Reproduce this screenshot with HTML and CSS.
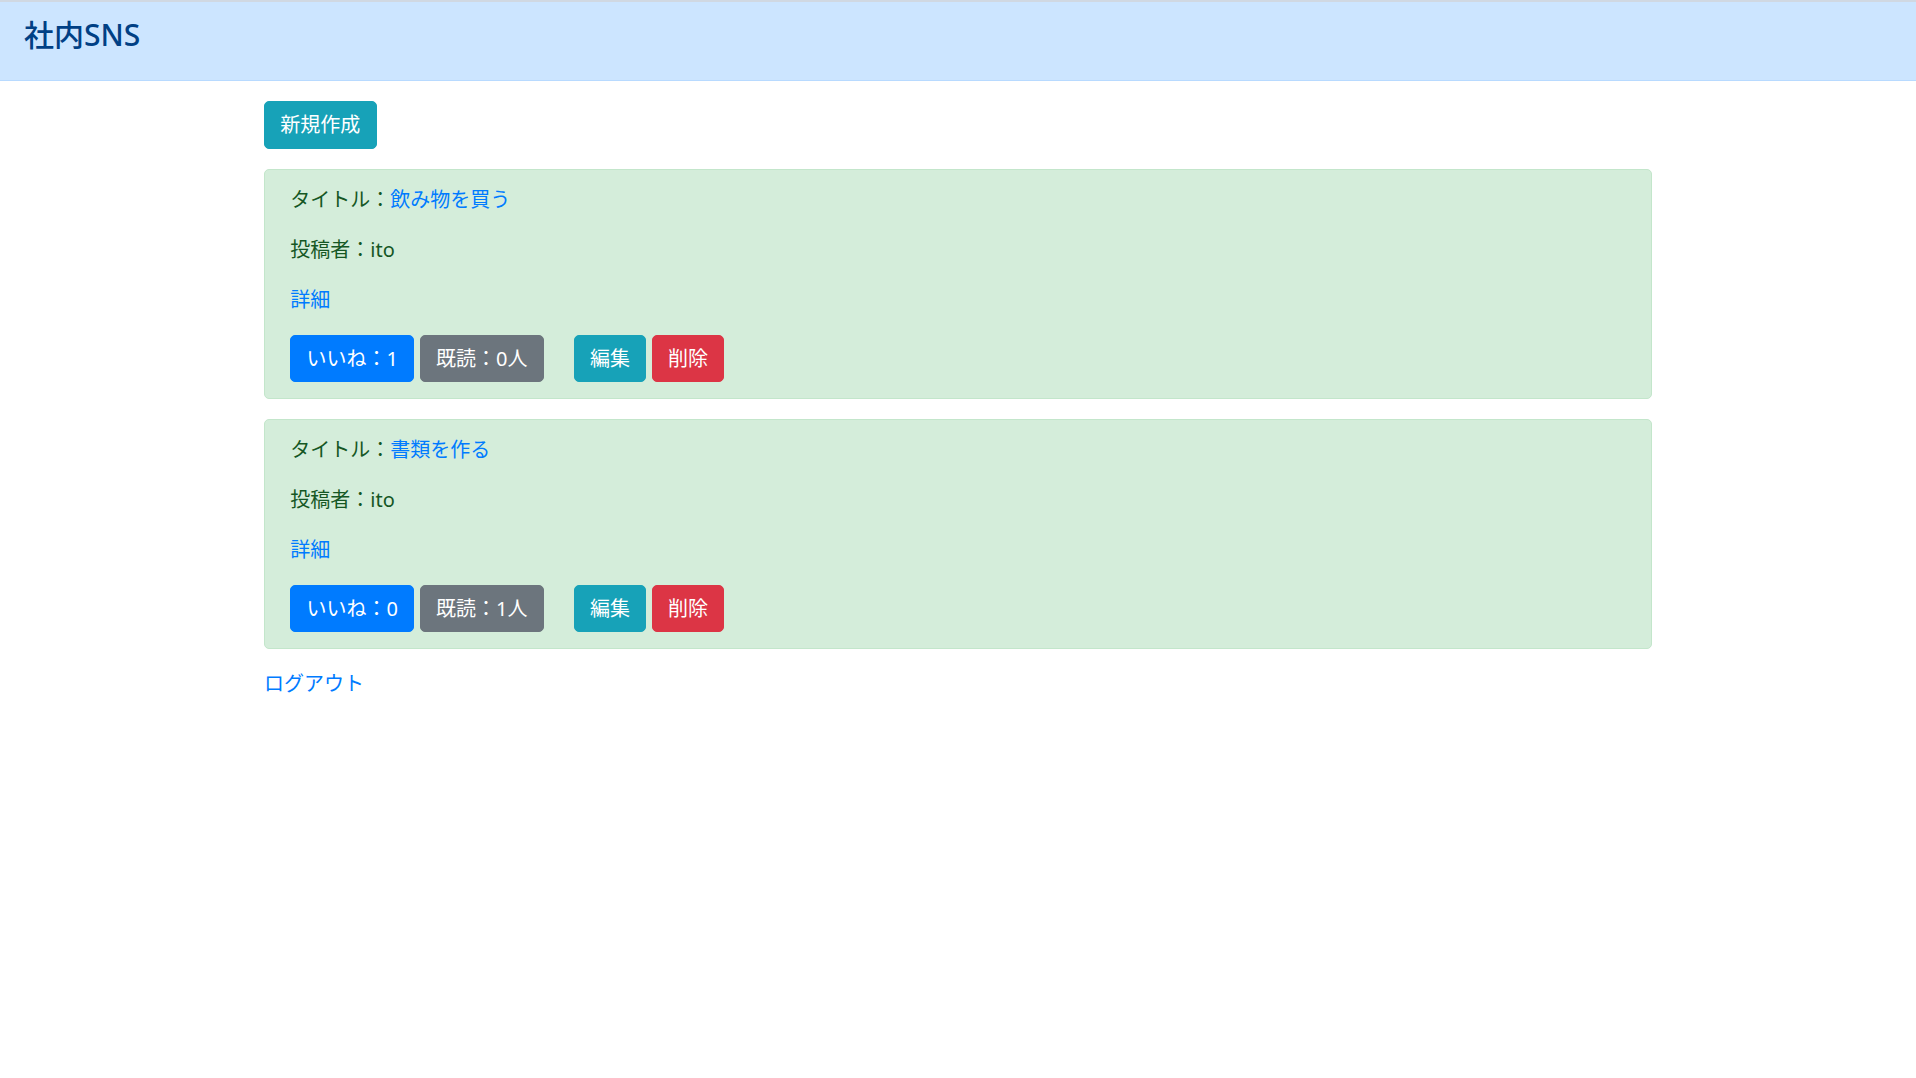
FILE: index.html
```html
<!DOCTYPE html>
<html lang="ja">
<head>
<meta charset="utf-8">
<title>社内SNS</title>
<link rel="stylesheet" href="styles.css">
</head>
<body>
<header class="site-header">
  <h1 class="brand">社内SNS</h1>
</header>
<main class="container">
  <a class="btn btn-info btn-new" href="#">新規作成</a>

  <section class="post">
    <p class="post-line">タイトル：<a class="link" href="#">飲み物を買う</a></p>
    <p class="post-line">投稿者：ito</p>
    <p class="post-line"><a class="link" href="#">詳細</a></p>
    <div class="post-actions">
      <div class="btn-group">
        <a class="btn btn-primary" href="#">いいね：1</a>
        <a class="btn btn-secondary" href="#">既読：0人</a>
      </div>
      <div class="btn-group">
        <a class="btn btn-info" href="#">編集</a>
        <a class="btn btn-danger" href="#">削除</a>
      </div>
    </div>
  </section>

  <section class="post">
    <p class="post-line">タイトル：<a class="link" href="#">書類を作る</a></p>
    <p class="post-line">投稿者：ito</p>
    <p class="post-line"><a class="link" href="#">詳細</a></p>
    <div class="post-actions">
      <div class="btn-group">
        <a class="btn btn-primary" href="#">いいね：0</a>
        <a class="btn btn-secondary" href="#">既読：1人</a>
      </div>
      <div class="btn-group">
        <a class="btn btn-info" href="#">編集</a>
        <a class="btn btn-danger" href="#">削除</a>
      </div>
    </div>
  </section>

  <p class="post-line"><a class="link" href="#">ログアウト</a></p>
</main>
</body>
</html>
```

FILE: styles.css
```css
* {
  box-sizing: border-box;
}

html, body {
  margin: 0;
  padding: 0;
  background: #ffffff;
}

body {
  font-family: "Noto Sans", "Noto Sans CJK JP", sans-serif;
  font-size: 20px;
  line-height: 30px;
  color: #212529;
}

.site-header {
  background: #cce5ff;
  border-top: 2px solid #d0d8e2;
  border-bottom: 1px solid #b8daff;
  padding: 15px 24px 27px;
}

.brand {
  margin: 0;
  font-size: 30px;
  line-height: 36px;
  font-weight: 500;
  color: #004085;
}

.container {
  width: 1388px;
  margin: 0 auto;
  padding-top: 20px;
}

.btn {
  display: inline-block;
  border: 1px solid transparent;
  border-radius: 5px;
  padding: 7.75px 15.25px;
  line-height: 30px;
  font-size: 20px;
  color: #ffffff;
  text-decoration: none;
  white-space: nowrap;
}

.btn-new {
  margin-bottom: 20px;
}

.btn-primary {
  background: #007bff;
  border-color: #007bff;
}

.btn-secondary {
  background: #6c757d;
  border-color: #6c757d;
}

.btn-info {
  background: #17a2b8;
  border-color: #17a2b8;
}

.btn-danger {
  background: #dc3545;
  border-color: #dc3545;
}

.post {
  background: #d4edda;
  border: 1px solid #c3e6cb;
  border-radius: 5px;
  padding: 15.25px 25.25px;
  margin-bottom: 20px;
  color: #155724;
}

.post-line {
  margin: 0 0 20px;
}

.link {
  color: #007bff;
  text-decoration: none;
}

.post-actions {
  display: flex;
  gap: 30px;
}

.btn-group {
  display: flex;
  gap: 5.5px;
}
```
